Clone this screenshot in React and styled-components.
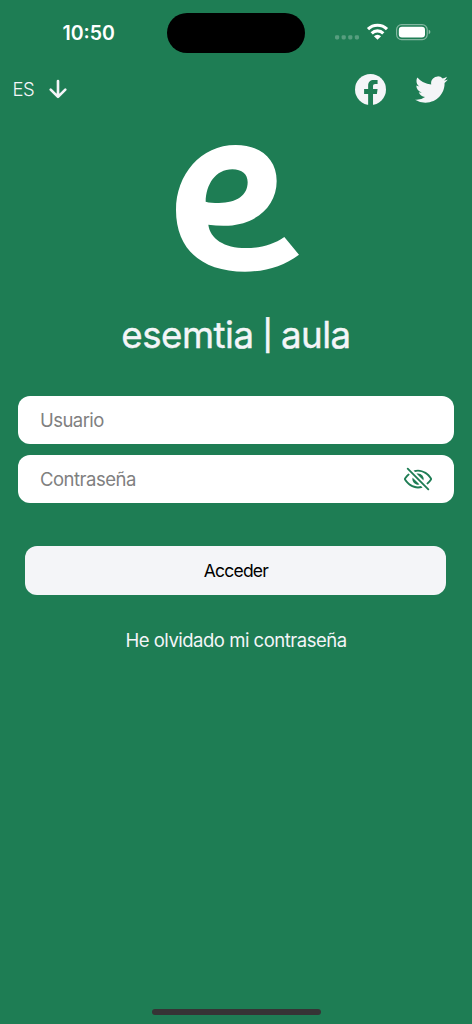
import styled, { createGlobalStyle } from 'styled-components';
import { IoArrowDown, IoEyeOffOutline, IoLogoTwitter } from 'react-icons/io5';

const GlobalStyle = createGlobalStyle`
  * {
    box-sizing: border-box;
  }

  body {
    margin: 0;
    background: #1e7d54;
    font-family: Inter, "Liberation Sans", sans-serif;
  }
`

const Screen = styled.main`
  display: flex;
  flex-direction: column;
  width: 472px;
  height: 1024px;
  overflow: hidden;
  background: #1e7d54;
  color: #f4f5f8;
`

const StatusBar = styled.div`
  display: grid;
  grid-template-columns: 167px 138px 1fr;
  height: 65px;
`

const Time = styled.span`
  padding: 21px 0 0 62.5px;
  color: #fff;
  font-size: 19.5px;
  font-weight: 600;
  line-height: 24px;
  white-space: nowrap;
`

const Island = styled.div`
  height: 40px;
  margin-top: 13px;
  border-radius: 20px;
  background: #000;
`

const Indicators = styled.div`
  padding: 22px 0 0 29px;

  svg {
    display: block;
  }
`

const Toolbar = styled.header`
  display: flex;
  align-items: center;
  height: 48px;
  padding: 0 23px 0 12.5px;

  svg {
    display: block;
  }
`

const Language = styled.button`
  display: flex;
  align-items: center;
  gap: 11px;
  padding: 0;
  border: 0;
  background: none;
  color: #f4f5f8;
  font: inherit;
  font-size: 18.5px;
  font-weight: 300;
  letter-spacing: -0.5px;

  svg path {
    stroke-width: 52px;
  }
`

const Socials = styled.div`
  display: flex;
  align-items: center;
  gap: 28px;
  margin-left: auto;
`

const Logo = styled.svg`
  display: block;
  width: 160px;
  height: 160px;
  margin: 17px 0 0 160px;
`

const Title = styled.h1`
  display: flex;
  justify-content: center;
  margin: 22px 0 0;
  font-size: 36.7px;
  font-weight: 400;
  line-height: 46px;
  letter-spacing: -0.5px;
  -webkit-text-stroke: 0.4px currentColor;
`

const Divider = styled.span`
  margin: 0 8px 0 9px;
  font-size: 30px;
  font-weight: 500;
  letter-spacing: 0;
`

const Form = styled.form`
  display: flex;
  flex-direction: column;
  gap: 11px;
  padding: 0 18px;
  margin-top: 37.6px;
`

const Field = styled.label`
  display: flex;
  align-items: center;
  height: 48.3px;
  padding: 0 21.5px 0 22px;
  border-radius: 12px;
  background: #fff;
  color: #1e7d54;
`

const Input = styled.input`
  flex: 1;
  min-width: 0;
  padding: 0;
  border: 0;
  outline: 0;
  background: none;
  color: #000;
  font: inherit;
  font-size: 18.5px;
  letter-spacing: ${({ $spacing }) => $spacing};

  &::placeholder {
    color: #808080;
    opacity: 1;
  }
`

const Submit = styled.button`
  height: 49px;
  margin: 32px 7.6px 0 7.4px;
  padding: 0;
  border: 0;
  border-radius: 12px;
  background: #f4f5f8;
  color: #000;
  font: inherit;
  font-size: 17.5px;
  letter-spacing: -0.75px;
`

const Forgot = styled.a`
  margin-top: 33px;
  font-size: 18.5px;
  line-height: 24px;
  text-align: center;
  letter-spacing: -0.49px;
`

const HomeBar = styled.div`
  width: 169px;
  height: 6px;
  margin: auto 0 9px 151.6px;
  border-radius: 3px;
  background: #363435;
`

const StatusIcons = () => (
  <svg width="98" height="22" viewBox="0 0 98 22" fill="#fff">
    <g opacity="0.25">
      <rect x="1" y="13.2" width="4.2" height="4.2" rx="1.4" />
      <rect x="7.6" y="13.2" width="4.2" height="4.2" rx="1.4" />
      <rect x="14.2" y="13.2" width="4.2" height="4.2" rx="1.4" />
      <rect x="20.8" y="13.2" width="4.2" height="4.2" rx="1.4" />
    </g>
    <g fill="none" stroke="#fff" strokeWidth="3.1">
      <path d="M34 7.2 A13.4 13.4 0 0 1 53 7.2" />
      <path d="M37.7 11.3 A8.2 8.2 0 0 1 49.3 11.3" />
    </g>
    <path d="M43.5 17.8 L39.9 14.2 A5 5 0 0 1 47.1 14.2 Z" />
    <rect x="62.6" y="2.6" width="30.6" height="15" rx="5" fill="none" stroke="#fff" strokeWidth="1.2" strokeOpacity="0.45" />
    <rect x="64.8" y="4.8" width="26.2" height="10.6" rx="3.2" />
    <path d="M94.7 7.8 Q96.4 8.4 96.4 10 Q96.4 11.6 94.7 12.2 Z" opacity="0.5" />
  </svg>
)

const FacebookIcon = () => (
  <svg width="31" height="31" viewBox="0 0 92 92">
    <circle cx="46" cy="46" r="46" fill="#f4f5f8" />
    <path
      d="M39 92 V59 H27 V44.5 H39 V35 C39 23.5 45 18 56 18 H67 V30 H60 C55.5 30 53.5 32 53.5 36 V44.5 H67 L65 59 H53.5 V92 Z"
      fill="#1e7d54"
    />
  </svg>
)

const App = () => {
  return (
    <>
      <GlobalStyle />
      <Screen>
        <StatusBar>
          <Time>10:50</Time>
          <Island />
          <Indicators><StatusIcons /></Indicators>
        </StatusBar>
        <Toolbar>
          <Language type="button">ES <IoArrowDown size={26} /></Language>
          <Socials>
            <FacebookIcon />
            <IoLogoTwitter size={35} />
          </Socials>
        </Toolbar>
        <Logo viewBox="0 0 480 480" fill="#fff">
          <path
            fillRule="evenodd"
            d="M417 374 L373 321 C340 344 302 354 258 354 C192 354 150 326 145 284 C165 287 185 288 205 287 C290 282 350 228 350 153 C350 86 300 45 227 45 C122 45 48 134 48 240 C48 357 124 425 255 425 C318 425 370 408 417 374 Z M137 215 C138 164 166 118 217 118 C246 118 263 133 263 157 C263 196 230 219 177 219 C160 219 148 218 137 215 Z"
          />
        </Logo>
        <Title>esemtia<Divider>|</Divider>aula</Title>
        <Form>
          <Field>
            <Input placeholder="Usuario" $spacing="-0.55px" />
          </Field>
          <Field>
            <Input type="password" placeholder="Contraseña" $spacing="-0.5px" />
            <IoEyeOffOutline size={30} />
          </Field>
          <Submit type="button">Acceder</Submit>
        </Form>
        <Forgot>He olvidado mi contraseña</Forgot>
        <HomeBar />
      </Screen>
    </>
  )
}
export default App
